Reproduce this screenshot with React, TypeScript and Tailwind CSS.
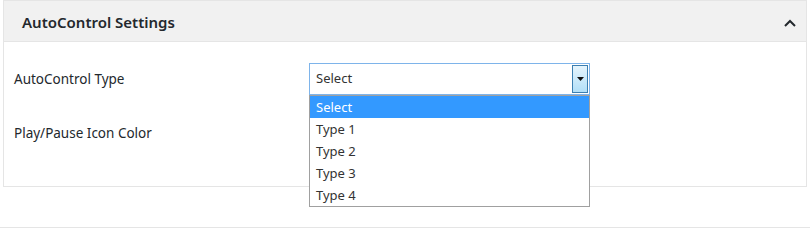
import React from "react";

const font = { fontFamily: '"Noto Sans", "Open Sans", sans-serif' };

const options = ["Select", "Type 1", "Type 2", "Type 3", "Type 4"];

function ChevronUp() {
  return (
    <svg width="12" height="8" viewBox="0 0 12 8" className="block">
      <path d="M1 7 L6 2 L11 7" fill="none" stroke="#23282d" strokeWidth="2" />
    </svg>
  );
}

function SelectBox() {
  return (
    <div className="relative w-[281px]">
      <div className="flex h-[32px] items-center justify-between border border-[#7eb4ea] bg-white pl-[6px] pr-[1px]">
        <span className="text-[13px] text-[#333]">Select</span>
        <div className="flex h-[28px] w-[16px] items-center justify-center border border-[#3c7fb1] bg-gradient-to-b from-[#e5f4fc] to-[#b1dff8]">
          <svg width="7" height="4" viewBox="0 0 7 4">
            <path d="M0 0 H7 L3.5 4 Z" fill="#111" />
          </svg>
        </div>
      </div>
      {/* open dropdown list */}
      <div className="absolute left-0 top-[32px] z-10 w-[281px] border border-[#a0a0a0] bg-white">
        {options.map((o, i) => (
          <div
            key={o}
            className={
              i === 0
                ? "h-[22px] bg-[#3399ff] pl-[6px] text-[13px] leading-[22px] text-white"
                : "h-[22px] pl-[6px] text-[13px] leading-[22px] text-[#333]"
            }
          >
            {o}
          </div>
        ))}
      </div>
    </div>
  );
}

export default function App() {
  return (
    <div className="h-[228px] w-full bg-white" style={font}>
      <div className="mx-[3px] h-[187px] border border-[#e5e5e5] bg-white">
        <div className="flex h-[41px] items-center justify-between border-b border-[#e5e5e5] bg-[#f1f1f1] pl-[18px] pr-[10px] pt-[3px]">
          <h2 className="text-[15px] font-semibold text-[#23282d]">AutoControl Settings</h2>
          <ChevronUp />
        </div>
        <div className="px-[10px] pt-[21px]">
          <div className="flex h-[32px] items-center">
            <div className="w-[295px] text-[13.5px] text-[#23282d]">AutoControl Type</div>
            <SelectBox />
          </div>
          <div className="mt-[22px] flex h-[32px] items-center">
            <div className="w-[295px] text-[13.5px] text-[#23282d]">Play/Pause Icon Color</div>
            <div className="h-[24px] w-[30px] border border-dashed border-[#ccc]" />
          </div>
        </div>
      </div>
      <div className="mt-[40px] border-t border-[#e5e5e5]" />
    </div>
  );
}
